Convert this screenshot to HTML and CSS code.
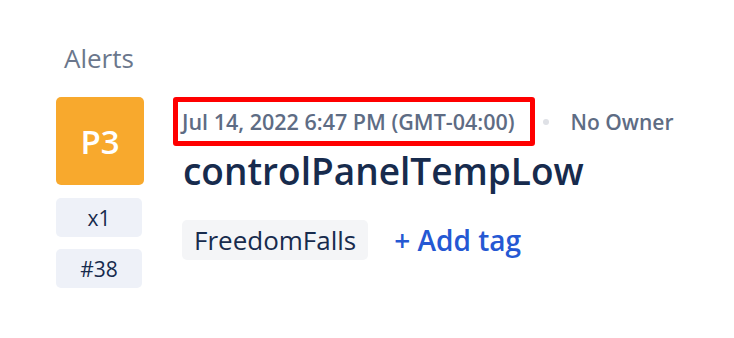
FILE: index.html
```html
<!DOCTYPE html>
<html>
<head>
<meta charset="utf-8">
<link rel="stylesheet" href="styles.css">
</head>
<body>
<div class="page">
  <div class="crumb">Alerts</div>
  <div class="alert">
    <div class="side">
      <div class="priority">P3</div>
      <div class="chip">x1</div>
      <div class="chip">#38</div>
    </div>
    <div class="main">
      <div class="meta">
        <span class="date">Jul 14, 2022 6:47 PM (GMT-04:00)</span>
        <span class="dot"></span>
        <span class="owner">No Owner</span>
      </div>
      <div class="title">controlPanelTempLow</div>
      <div class="tags">
        <span class="tag">FreedomFalls</span>
        <span class="add">+ Add tag</span>
      </div>
    </div>
  </div>
</div>
</body>
</html>
```
FILE: styles.css
```css
html, body {
  margin: 0;
  padding: 0;
  background: #ffffff;
}
body {
  font-family: "Open Sans", "Noto Sans", sans-serif;
  color: #172b4d;
}
.page {
  padding: 40px 0 0 56px;
}
.crumb {
  margin-left: 8px;
  font-size: 26px;
  line-height: 36px;
  color: #6b778c;
}
.alert {
  display: flex;
  gap: 29px;
  margin-top: 21px;
}
.side {
  width: 88px;
  display: flex;
  flex-direction: column;
  gap: 12px;
}
.priority {
  height: 88px;
  background: #f8a92d;
  border-radius: 5px;
  color: #ffffff;
  font-size: 33px;
  font-weight: 600;
  display: flex;
  align-items: center;
  justify-content: center;
  margin-bottom: 1px;
}
.chip {
  width: 86px;
  height: 39px;
  background: #eef1f8;
  border-radius: 5px;
  display: flex;
  align-items: center;
  justify-content: center;
  font-size: 21px;
  color: #172b4d;
}
.main {
  display: flex;
  flex-direction: column;
}
.meta {
  display: flex;
  align-items: center;
}
.date {
  border: 5px solid #ff0000;
  border-radius: 3px;
  padding: 5px 15px 5px 4px;
  font-size: 21.5px;
  line-height: 29px;
  font-weight: 600;
  color: #5e6c84;
}
.dot {
  width: 6px;
  height: 6px;
  border-radius: 50%;
  background: #dfe1e6;
  margin: 0 22px 0 8px;
}
.owner {
  font-size: 21px;
  font-weight: 600;
  color: #5e6c84;
}
.title {
  margin-left: 10px;
  font-size: 37px;
  font-weight: 600;
  line-height: 50px;
  color: #172b4d;
}
.tags {
  display: flex;
  align-items: center;
  gap: 26px;
  margin-top: 24px;
  margin-left: 9px;
}
.tag {
  background: #f4f5f7;
  border-radius: 5px;
  padding: 0 12px;
  height: 40px;
  display: flex;
  align-items: center;
  font-size: 26px;
  color: #172b4d;
}
.add {
  font-size: 28px;
  font-weight: 600;
  color: #2558d3;
}
```
